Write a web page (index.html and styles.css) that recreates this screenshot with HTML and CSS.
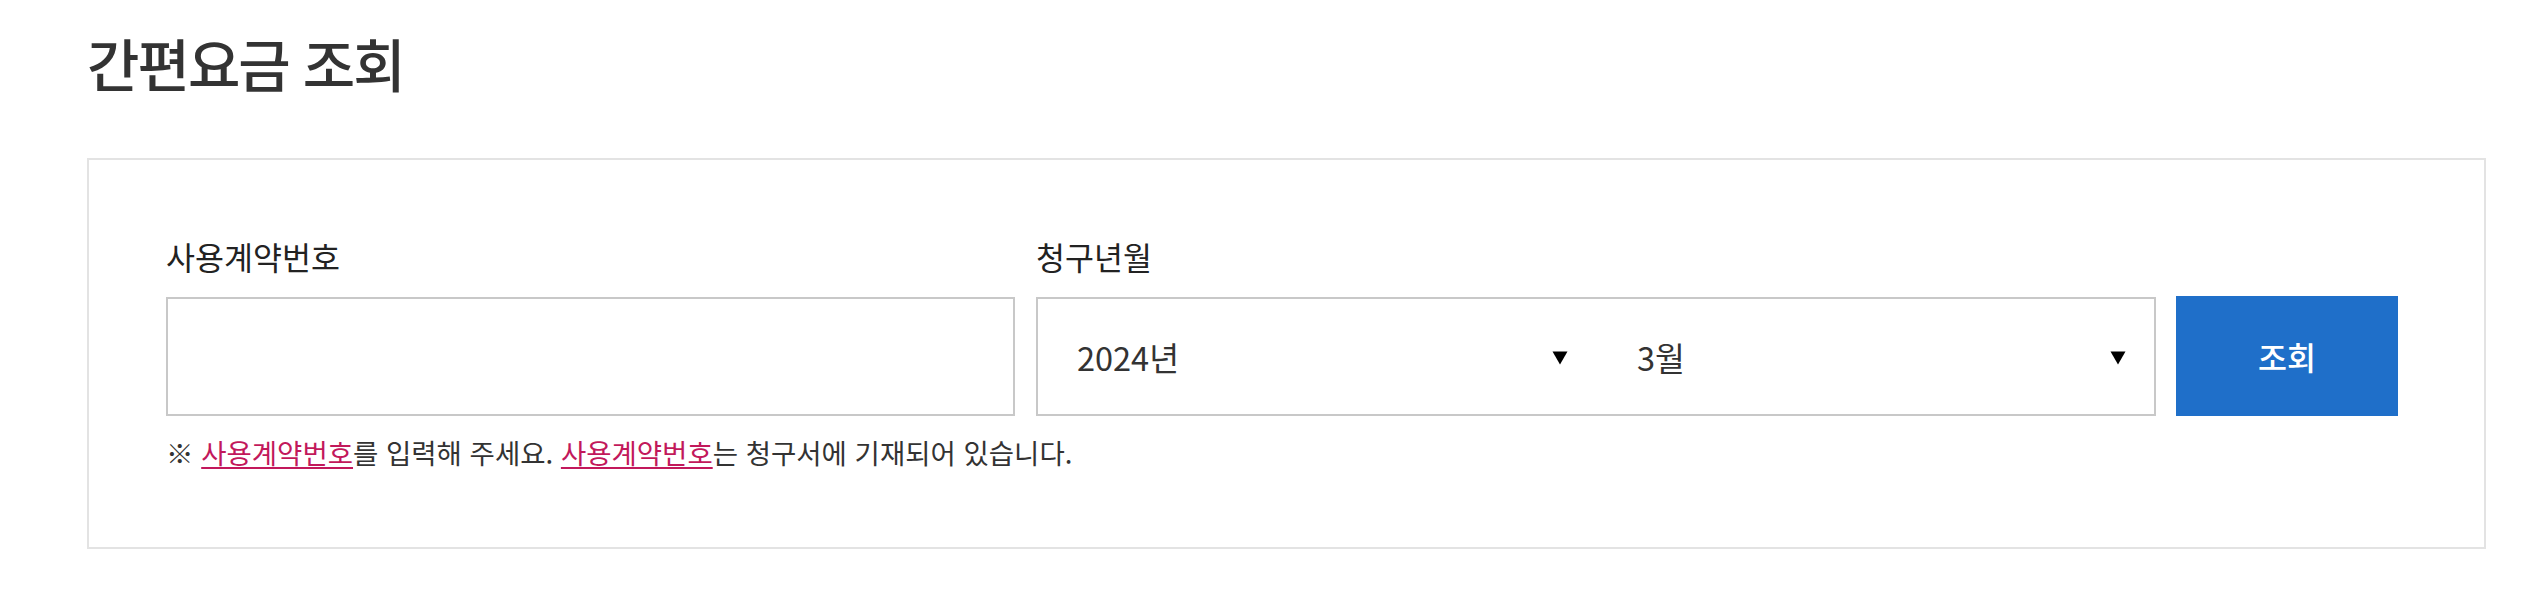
FILE: index.html
```html
<!DOCTYPE html>
<html lang="ko">
<head>
<meta charset="utf-8">
<title>간편요금 조회</title>
<link rel="stylesheet" href="styles.css">
</head>
<body>
<main class="page">
  <h1 class="title">간편요금 조회</h1>
  <section class="card">
    <form class="form">
      <div class="field field-contract">
        <label class="label" for="contract">사용계약번호</label>
        <input class="text-input" id="contract" type="text">
      </div>
      <div class="field field-date">
        <span class="label">청구년월</span>
        <div class="select-group">
          <div class="select-wrap">
            <select class="select" aria-label="년">
              <option>2024년</option>
            </select>
            <svg class="arrow" viewBox="0 0 16 14" width="16" height="14" aria-hidden="true"><path d="M0.5 0.5 L15.5 0.5 L8 13.5 Z" fill="#000"/></svg>
          </div>
          <div class="select-wrap">
            <select class="select" aria-label="월">
              <option>3월</option>
            </select>
            <svg class="arrow" viewBox="0 0 16 14" width="16" height="14" aria-hidden="true"><path d="M0.5 0.5 L15.5 0.5 L8 13.5 Z" fill="#000"/></svg>
          </div>
        </div>
      </div>
      <div class="field field-btn">
        <button class="btn" type="button">조회</button>
      </div>
    </form>
    <p class="note">※ <a href="#" class="link">사용계약번호</a>를 입력해 주세요. <a href="#" class="link">사용계약번호</a>는 청구서에 기재되어 있습니다.</p>
  </section>
</main>
</body>
</html>
```

FILE: styles.css
```css
* { box-sizing: border-box; }

html, body {
  margin: 0;
  padding: 0;
  background: #fff;
}

body {
  font-family: "Noto Sans CJK KR", "Noto Sans", sans-serif;
  color: #333;
}

.page {
  padding: 30px 40px 0 87px;
}

.title {
  margin: 0;
  font-size: 57px;
  line-height: 65px;
  font-weight: 500;
  letter-spacing: -2px;
  color: #333;
}

.card {
  margin-top: 63px;
  border: 2px solid #e3e3e3;
  padding: 78px 0 76px 77px;
}

.form {
  display: flex;
  align-items: flex-end;
}

.field {
  display: flex;
  flex-direction: column;
}

.field-contract { width: 849px; }
.field-date { width: 1120px; margin-left: 21px; }
.field-btn { width: 222px; margin-left: 20px; }

.label {
  font-size: 31.5px;
  line-height: 36px;
  color: #222;
  margin-bottom: 23px;
}

.text-input {
  height: 119px;
  border: 2px solid #c8c8c8;
  background: #fff;
  font: inherit;
  font-size: 32px;
  padding: 0 20px;
  outline: none;
}

.select-group {
  height: 119px;
  border: 2px solid #c8c8c8;
  display: flex;
}

.select-wrap {
  position: relative;
  flex: 1;
  display: flex;
}

.select {
  flex: 1;
  appearance: none;
  -webkit-appearance: none;
  border: 0;
  background: transparent;
  font-family: inherit;
  font-size: 32.5px;
  color: #333;
  padding: 0 0 0 39px;
  outline: none;
}

.select-wrap + .select-wrap .select {
  padding-left: 41px;
}

.arrow {
  position: absolute;
  right: 28px;
  top: 52px;
  pointer-events: none;
}

.btn {
  height: 120px;
  border: 0;
  background: #1f6fc9;
  color: #fff;
  font-family: inherit;
  font-size: 31.5px;
  font-weight: 500;
  cursor: pointer;
}

.note {
  margin: 17px 0 0;
  font-size: 27.5px;
  line-height: 38px;
  color: #333;
}

.link {
  color: #c2185b;
  text-decoration: underline;
  text-underline-offset: 3px;
}
```
